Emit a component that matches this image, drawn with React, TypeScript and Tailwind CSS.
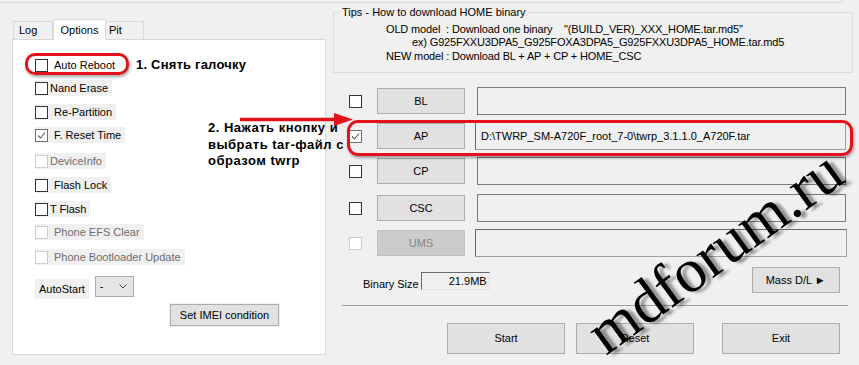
import * as React from 'react';

type Opt = { label: string; gap: string; checked?: boolean; disabled?: boolean; tight?: boolean; plain?: boolean };

const options: Opt[] = [
  { label: 'Auto Reboot', gap: 'mt-[17px]', plain: true },
  { label: 'Nand Erase', gap: 'mt-[7px]', tight: true },
  { label: 'Re-Partition', gap: 'mt-[8px]' },
  { label: 'F. Reset Time', gap: 'mt-[7px]', checked: true },
  { label: 'DeviceInfo', gap: 'mt-[10px]', disabled: true, tight: true },
  { label: 'Flash Lock', gap: 'mt-[8px]' },
  { label: 'T Flash', gap: 'mt-[8px]', tight: true },
  { label: 'Phone EFS Clear', gap: 'mt-[7px]', disabled: true },
  { label: 'Phone Bootloader Update', gap: 'mt-[9px]', disabled: true },
];

function Check({ checked, disabled }: { checked?: boolean; disabled?: boolean }) {
  return (
    <span
      className={
        'flex h-[13px] w-[13px] shrink-0 items-center justify-center border bg-white ' +
        (disabled ? 'border-[#cccccc]' : checked ? 'border-[#6e6e6e]' : 'border-[#333333]')
      }
    >
      {checked && (
        <svg width="11" height="11" viewBox="0 0 11 11">
          <path d="M2 5.5 L4.5 8 L9 2.5" fill="none" stroke="#5a5a5a" strokeWidth="1.1" />
        </svg>
      )}
    </span>
  );
}

function Btn({ label, className, disabled }: { label: React.ReactNode; className: string; disabled?: boolean }) {
  return (
    <div
      className={
        'flex items-center justify-center border ' +
        (disabled ? 'border-[#bfbfbf] bg-[#cccccc] text-[#838383] ' : 'border-[#adadad] bg-[#e1e1e1] text-black ') +
        className
      }
    >
      {label}
    </div>
  );
}

const rows = [
  { name: 'BL', gap: 'mt-[14px]', field: 'ml-[12px] w-[369px]' },
  { name: 'AP', gap: 'mt-[7px]', checked: true, path: 'D:\\TWRP_SM-A720F_root_7-0\\twrp_3.1.1.0_A720F.tar', field: 'ml-[10px] w-[371px]' },
  { name: 'CP', gap: 'mt-[7px]', field: 'ml-[12px] w-[369px]' },
  { name: 'CSC', gap: 'mt-[9px]', field: 'ml-[12px] w-[369px]' },
  { name: 'UMS', gap: 'mt-[7px]', disabled: true, field: 'ml-[10px] w-[372px]' },
];

export default function App() {
  return (
    <div className="relative h-[365px] w-[859px] overflow-hidden bg-[#f0f0f0] font-['Liberation_Sans',Arial,sans-serif] text-[11px] text-black">
      <div className="h-[3px] w-[843px] border-b border-r border-[#dcdcdc]" />
      <div className="flex">
        {/* left: tabbed options */}
        <div className="ml-[12px] mt-[15px] w-[314px]">
          <div className="flex h-[21px] items-end pl-[1px]">
            <div className="flex h-[18px] w-[40px] items-center border border-b-0 border-[#d9d9d9] pl-[5px]">Log</div>
            <div className="relative z-10 -mb-px flex h-[21px] w-[53px] items-center justify-center border border-b-0 border-[#d9d9d9] bg-white">Options</div>
            <div className="flex h-[18px] w-[38px] items-center border border-b-0 border-l-0 border-[#d9d9d9] pl-[3px]">Pit</div>
          </div>
          <div className="flex h-[316px] flex-col border border-[#d9d9d9] bg-white pl-[22px]">
            {options.map((o) => (
              <div key={o.label} className={o.gap + ' flex'}>
                <div className={'flex h-[16px] items-center pr-[4px] ' + (o.plain ? 'bg-white' : 'bg-[#f0f0f0]')}>
                  <Check checked={o.checked} disabled={o.disabled} />
                  <span className={(o.tight ? 'ml-[2px] ' : 'ml-[6px] ') + (o.disabled ? 'text-[#6d6d6d]' : '')}>{o.label}</span>
                </div>
              </div>
            ))}
            <div className="mt-[11px] flex items-start">
              <div className="mt-[3px] flex h-[20px] items-center bg-[#f0f0f0] px-[4px]">AutoStart</div>
              <div className="ml-[6px] flex h-[21px] w-[39px] items-center justify-between border border-[#adadad] bg-[#e5e5e5] pl-[4px] pr-[6px]">
                <span>-</span>
                <svg width="8" height="5" viewBox="0 0 8 5">
                  <path d="M0.5 0.5 L4 4 L7.5 0.5" fill="none" stroke="#444" strokeWidth="1" />
                </svg>
              </div>
            </div>
            <div className="mt-[4px] ml-[134px] w-[111px] bg-[#f0f0f0] p-px">
              <Btn label="Set IMEI condition" className="h-[22px]" />
            </div>
          </div>
        </div>

        {/* right: files */}
        <div className="ml-[7px] flex w-[520px] flex-col">
          <fieldset className="mt-[3px] h-[67px] border border-[#dcdcdc] leading-[13.5px]">
            <legend className="ml-[6px] px-[2px]">Tips - How to download HOME binary</legend>
            <div className="mt-[3px] pl-[52px] tracking-[-0.15px]">
              <div className="whitespace-pre">OLD model  : Download one binary    "(BUILD_VER)_XXX_HOME.tar.md5"</div>
              <div className="whitespace-pre pl-[26px]">ex) G925FXXU3DPA5_G925FOXA3DPA5_G925FXXU3DPA5_HOME.tar.md5</div>
              <div className="whitespace-pre">NEW model : Download BL + AP + CP + HOME_CSC</div>
            </div>
          </fieldset>

          {rows.map((r) => (
            <div key={r.name} className={r.gap + ' flex h-[28px] items-center'}>
              <div className="ml-[16px]">
                <Check checked={r.checked} disabled={r.disabled} />
              </div>
              <Btn label={r.name} disabled={r.disabled} className="ml-[15px] h-[26px] w-[88px]" />
              <div
                className={
                  r.field +
                  ' h-[28px] border pl-[5px] pt-[5px] ' +
                  (r.path || r.disabled ? 'border-[#a0a0a0] border-l-[#696969] border-t-[#696969]' : 'border-[#7a7a7a]')
                }
              >
                {r.path}
              </div>
            </div>
          ))}

          <div className="mt-[10px] flex h-[26px] items-start">
            <span className="ml-[30px] mt-[9px]">Binary Size</span>
            <div className="ml-[2px] mt-[5px] flex h-[18px] w-[69px] items-center justify-end border border-[#e3e3e3] border-l-[#696969] border-t-[#696969] pr-[2px]">21.9MB</div>
            <Btn label="Mass D/L ►" className="ml-[262px] h-[26px] w-[88px]" />
          </div>
          <div className="ml-[9px] mt-[12px] h-px w-[506px] bg-[#a0a0a0]" />
          <div className="mt-[17px] flex">
            <Btn label="Start" className="ml-[114px] h-[31px] w-[118px]" />
            <Btn label="Reset" className="ml-[11px] h-[31px] w-[118px]" />
            <Btn label="Exit" className="ml-[28px] h-[31px] w-[118px]" />
          </div>
        </div>
      </div>

      {/* annotations drawn over the screenshot */}
      <div className="pointer-events-none absolute left-[25px] top-[53px] h-[22px] w-[104px] rounded-[10px] border-[3px] border-[#e3121a] shadow-[1px_2px_3px_rgba(0,0,0,0.35)]" />
      <div className="pointer-events-none absolute left-[347px] top-[120px] h-[36px] w-[506px] rounded-[11px] border-[3px] border-[#e3121a] shadow-[1px_2px_3px_rgba(0,0,0,0.35)]" />
      <div className="absolute left-[136px] top-[55px] text-[13px] font-bold tracking-[0.2px]">1. Снять галочку</div>
      <div className="absolute left-[208px] top-[120px] text-[13px] font-bold leading-[16.5px] tracking-[0.5px]">
        2. Нажать кнопку и
        <br />
        выбрать tar-файл с
        <br />
        образом twrp
      </div>
      <svg className="absolute left-[238px] top-[110px]" width="118" height="20" viewBox="0 0 118 20">
        <path d="M2 9.5 H100" stroke="#e3121a" strokeWidth="3.5" />
        <path d="M96 3 L115 9.5 L96 16 Z" fill="#e3121a" />
      </svg>

      {/* watermark */}
      <div className="absolute left-[612px] top-[302px] origin-bottom-left -rotate-[36deg] whitespace-nowrap font-['Liberation_Serif','Times_New_Roman',serif] text-[62px] leading-[62px] text-black [text-shadow:4px_4px_3px_rgba(0,0,0,0.4)]">
        mdforum.ru
      </div>
    </div>
  );
}
